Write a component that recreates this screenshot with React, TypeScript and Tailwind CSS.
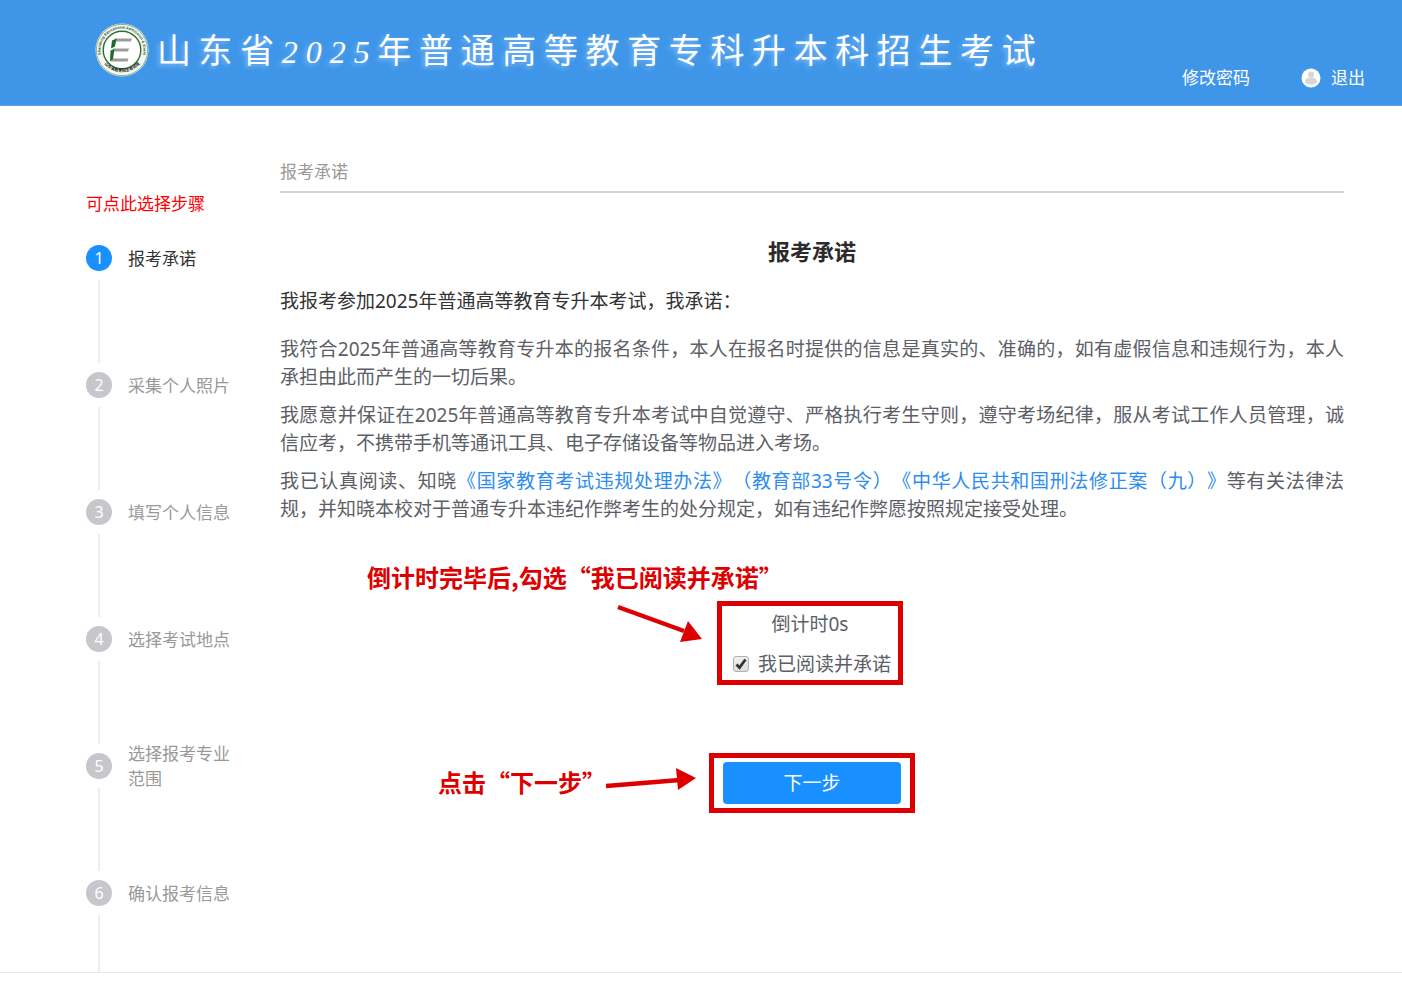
import React, { useState } from 'react';

const steps = ['报考承诺', '采集个人照片', '填写个人信息', '选择考试地点', '选择报考专业范围', '确认报考信息'];

function Logo() {
  return (
    <svg className="w-[54px] h-[54px] shrink-0" viewBox="0 0 54 54" aria-label="山东省教育招生考试院">
      <defs>
        <path id="ringTop" d="M 7 35 A 21.5 21.5 0 1 1 47 35" />
        <path id="ringBottom" d="M 6 36 A 23.5 23.5 0 0 0 48 36" />
      </defs>
      <circle cx="27" cy="27" r="26.5" fill="#f4f7f4" />
      <circle cx="27" cy="27" r="25.7" fill="none" stroke="#6f9a6c" strokeWidth="0.8" />
      <circle cx="27" cy="27" r="18.8" fill="#fff" stroke="#2f6b35" strokeWidth="1.4" />
      <text fontSize="3.8" fontWeight="700" fill="#2c5a30" fontFamily="Liberation Sans, sans-serif">
        <textPath href="#ringTop" startOffset="50%" textAnchor="middle">Shandong Educational Admission &amp; Exam</textPath>
      </text>
      <text fontSize="4" fontWeight="700" fill="#222" fontFamily="Noto Sans CJK SC, sans-serif">
        <textPath href="#ringBottom" startOffset="50%" textAnchor="middle">山东省教育招生考试院</textPath>
      </text>
      <path d="M20 15.5h17l-1 3H19.5z M18.5 25.5h15.500l-1 3H18z M17 35.5h16.500l-1 3H16z" fill="#9b9b9b" />
      <path d="M17 17.500l4.500-2-1.500 8-4 2z M15.500 27.500l4-1.500-1.500 10-3 2.500z" fill="#1f6b2a" />
    </svg>
  );
}

function Header() {
  return (
    <header className="flex justify-between h-[106px] pl-[95px] pr-[37px] bg-[#3f96e8] border-b border-[#5ba5eb] text-white">
      <div className="flex items-center gap-2 h-[100px]">
        <Logo />
        <h1 className="text-[34px] leading-[40px] whitespace-nowrap font-normal font-['Noto_Sans_CJK_SC',sans-serif] [text-shadow:-2px_2px_4px_#7ab8fa]">
          山 东 省 <span className="text-[32px] italic font-['Liberation_Serif',serif]">2 0 2 5</span> 年 普 通 高 等 教 育 专 科 升 本 科 招 生 考 试
        </h1>
      </div>
      <nav className="flex items-end gap-[51px] pb-[15px] text-[17px] leading-[24px] whitespace-nowrap">
        <a href="#password">修改密码</a>
        <a href="#logout" className="flex items-center gap-[10px]">
          <svg className="w-5 h-5" viewBox="0 0 20 20">
            <circle cx="10" cy="10" r="9.500" fill="#fff" />
            <circle cx="10" cy="6.500" r="3" fill="#d6d6d6" />
            <ellipse cx="10" cy="13" rx="6" ry="3.700" fill="#d6d6d6" />
          </svg>
          退出
        </a>
      </nav>
    </header>
  );
}

function Steps() {
  const [active, setActive] = useState(0);
  return (
    <aside className="w-[194px] shrink-0 pt-[85px] text-[17px]">
      <p className="leading-[26px] text-[#ff0000]">可点此选择步骤</p>
      <ol className="mt-7">
        {steps.map((step, i) => (
          <li key={step}>
            <button
              type="button"
              onClick={() => setActive(i)}
              className={`flex items-center gap-4 h-[26px] text-left cursor-pointer ${i === active ? 'text-[#333333]' : 'text-[#999999]'}`}
            >
              <span
                className={`flex items-center justify-center w-[26px] h-[26px] rounded-full text-base text-white ${i === active ? 'bg-[#1890ff]' : 'bg-[#c6c7cb]'}`}
              >
                {i + 1}
              </span>
              <span className="w-[106px] leading-[25px]">{step}</span>
            </button>
            <div
              className={`ml-3 w-[2px] mt-[9px] bg-[#ededed] ${i === steps.length - 1 ? 'h-[57px]' : 'h-[83px] mb-[9px]'}`}
            />
          </li>
        ))}
      </ol>
    </aside>
  );
}

export default function App() {
  const [agreed, setAgreed] = useState(true);

  return (
    <div lang="zh-CN" className="min-h-screen bg-white font-['Noto_Sans','Noto_Sans_CJK_SC',sans-serif]">
      <Header />
      <div className="flex pl-[86px] pr-[58px] border-b border-[#e8e8e8]">
        <Steps />
        <main className="flex-1 min-w-0 pt-[54px] text-[19px] leading-[28px] text-[#5c6066]">
          <div className="pb-[7px] border-b-2 border-[#d3d3d3] text-[17px] leading-[24px] text-[#999999]">报考承诺</div>
          <h2 className="mt-[42px] text-center text-[22px] leading-[32px] font-bold text-[#2b2b2b]">报考承诺</h2>

          <p className="mt-5 text-[#333333]">我报考参加2025年普通高等教育专升本考试，我承诺：</p>
          <div className="mt-5 space-y-[10px] text-justify [text-spacing-trim:space-all]">
            <p>
              我符合2025年普通高等教育专升本的报名条件，本人在报名时提供的信息是真实的、准确的，如有虚假信息和违规行为，本人承担由此而产生的一切后果。
            </p>
            <p>
              我愿意并保证在2025年普通高等教育专升本考试中自觉遵守、严格执行考生守则，遵守考场纪律，服从考试工作人员管理，诚信应考，不携带手机等通讯工具、电子存储设备等物品进入考场。
            </p>
            <p>
              我已认真阅读、知晓
              <a href="#rules" className="text-[#2d8cf0]">《国家教育考试违规处理办法》（教育部33号令）</a>
              <a href="#law" className="text-[#2d8cf0]">《中华人民共和国刑法修正案（九）》</a>
              等有关法律法规，并知晓本校对于普通专升本违纪作弊考生的处分规定，如有违纪作弊愿按照规定接受处理。
            </p>
          </div>

          {/* Hints and confirmation */}
          <p className="mt-[38px] ml-[87px] text-2xl leading-[32px] font-bold text-[#de0000] font-['Noto_Sans_CJK_SC',sans-serif]">
            倒计时完毕后,勾选“我已阅读并承诺”
          </p>
          <div className="grid grid-cols-[1fr_auto_1fr] mt-2 mr-1">
            <div className="flex justify-end items-start pr-[11px]">
              <svg className="w-24 h-11" viewBox="0 0 96 44" fill="#de0000">
                <path d="M8 6L74 30" stroke="#de0000" strokeWidth="4.500" />
                <path d="M78 20L92 38L70 41z" />
              </svg>
            </div>
            <div className="flex flex-col gap-3 w-[186px] pt-1 pb-[2px] pl-[11px] border-5 border-[#de0000]">
              <p className="text-center pr-[11px]">倒计时0s</p>
              <label className="flex items-center gap-[9px] whitespace-nowrap">
                <span className="relative w-4 h-4">
                  <input
                    type="checkbox"
                    checked={agreed}
                    onChange={(e) => setAgreed(e.target.checked)}
                    className="peer block w-4 h-4 appearance-none rounded-[3px] border border-[#b0b0b0] bg-linear-to-b from-[#f0f0f0] to-[#dedede]"
                  />
                  <svg
                    className="absolute inset-0 w-4 h-4 pointer-events-none opacity-0 peer-checked:opacity-100"
                    viewBox="0 0 16 16"
                    fill="none"
                    stroke="#333333"
                    strokeWidth="2.800"
                  >
                    <path d="M3.500 8.500L6.500 11.500L12.500 3.500" />
                  </svg>
                </span>
                我已阅读并承诺
              </label>
            </div>
          </div>

          <div className="grid grid-cols-[1fr_auto_1fr] mt-[68px]">
            <div className="flex justify-end items-center pr-[13px] pb-[2px]">
              <span className="text-2xl leading-[32px] font-bold text-[#de0000] whitespace-nowrap font-['Noto_Sans_CJK_SC',sans-serif]">
                点击“下一步”
              </span>
              <svg className="w-[90px] h-11" viewBox="0 0 90 44" fill="#de0000">
                <path d="M0 26L74 20" stroke="#de0000" strokeWidth="4.500" />
                <path d="M70 8L90 18L72 30z" />
              </svg>
            </div>
            <div className="px-[9px] py-1 border-5 border-[#de0000]">
              <button type="button" className="block w-[178px] h-[42px] rounded bg-[#1890ff] text-white cursor-pointer">
                下一步
              </button>
            </div>
          </div>
        </main>
      </div>
    </div>
  );
}
